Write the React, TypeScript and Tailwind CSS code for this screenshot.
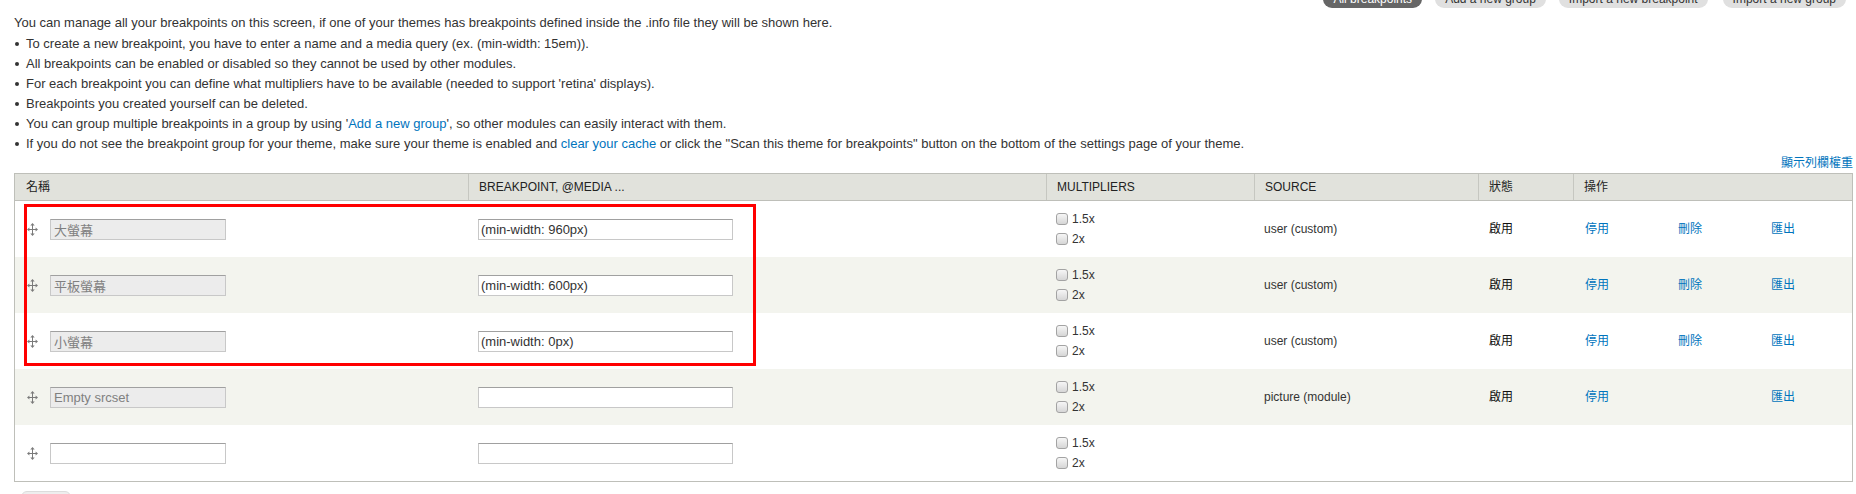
import React from "react";

type Row = {
  name: string;
  nameDisabled: boolean;
  bp: string;
  source: string;
  status: string;
  ops: string[];
  even: boolean;
};

const rows: Row[] = [
  { name: "大螢幕", nameDisabled: true, bp: "(min-width: 960px)", source: "user (custom)", status: "啟用", ops: ["停用", "刪除", "匯出"], even: false },
  { name: "平板螢幕", nameDisabled: true, bp: "(min-width: 600px)", source: "user (custom)", status: "啟用", ops: ["停用", "刪除", "匯出"], even: true },
  { name: "小螢幕", nameDisabled: true, bp: "(min-width: 0px)", source: "user (custom)", status: "啟用", ops: ["停用", "刪除", "匯出"], even: false },
  { name: "Empty srcset", nameDisabled: true, bp: "", source: "picture (module)", status: "啟用", ops: ["停用", "", "匯出"], even: true },
  { name: "", nameDisabled: false, bp: "", source: "", status: "", ops: ["", "", ""], even: false },
];

function Handle() {
  return (
    <svg width="11" height="13" viewBox="0 0 11 13" className="shrink-0">
      <line x1="5.5" y1="1.5" x2="5.5" y2="11.5" stroke="#7a7a7a" strokeWidth="1" />
      <line x1="1.5" y1="6.5" x2="9.5" y2="6.5" stroke="#7a7a7a" strokeWidth="1" />
      <polygon points="5.5,0 3.3,2.6 7.7,2.6" fill="#7a7a7a" />
      <polygon points="5.5,13 3.3,10.4 7.7,10.4" fill="#7a7a7a" />
      <polygon points="0,6.5 2.4,4.6 2.4,8.4" fill="#7a7a7a" />
      <polygon points="11,6.5 8.6,4.6 8.6,8.4" fill="#7a7a7a" />
    </svg>
  );
}

function Checkbox({ label }: { label: string }) {
  return (
    <div className="flex items-center h-[20px]">
      <span className="inline-block w-[12px] h-[12px] rounded-[3px] border border-[#a3a3a3] bg-linear-to-b from-[#f6f6f6] to-[#d6d6d6]" />
      <span className="ml-[4px] text-[12px] text-[#333]">{label}</span>
    </div>
  );
}

const GRID = "grid grid-cols-[453px_578px_208px_224px_95px_93px_93px_93px]";
const FONT = '"Liberation Sans", "Noto Sans CJK TC", Arial, sans-serif';

export default function App() {
  return (
    <div
      className="flex flex-col w-[1856px] h-[494px] overflow-hidden bg-white pl-[14px] pr-[3px] text-[#333]"
      style={{ fontFamily: FONT }}
    >
      {/* top action buttons (cut off) */}
      <div className="-mt-[13px] flex justify-end pr-[7px] text-[12px]">
        <span className="h-[21px] pt-[4px] leading-[17px] px-[10px] rounded-[9px] bg-[#666] text-white">All breakpoints</span>
        <span className="ml-[13px] h-[21px] pt-[4px] leading-[17px] px-[10px] rounded-[9px] bg-[#e0e0e0] text-[#333]">Add a new group</span>
        <span className="ml-[13px] h-[21px] pt-[4px] leading-[17px] px-[10px] rounded-[9px] bg-[#e0e0e0] text-[#333]">Import a new breakpoint</span>
        <span className="ml-[15px] h-[21px] pt-[4px] leading-[17px] px-[10px] rounded-[9px] bg-[#e0e0e0] text-[#333]">Import a new group</span>
      </div>

      <p className="mt-[5px] text-[13px] leading-[20px]">
        You can manage all your breakpoints on this screen, if one of your themes has breakpoints defined inside the .info file they will be shown here.
      </p>
      <ul className="mt-[1px] text-[13px] leading-[20px]">
        {[
          <>To create a new breakpoint, you have to enter a name and a media query (ex. (min-width: 15em)).</>,
          <>All breakpoints can be enabled or disabled so they cannot be used by other modules.</>,
          <>For each breakpoint you can define what multipliers have to be available (needed to support 'retina' displays).</>,
          <>Breakpoints you created yourself can be deleted.</>,
          <>
            You can group multiple breakpoints in a group by using '<a className="text-[#0074bd]">Add a new group</a>', so other modules can easily interact with them.
          </>,
          <>
            If you do not see the breakpoint group for your theme, make sure your theme is enabled and <a className="text-[#0074bd]">clear your cache</a> or click the "Scan this theme for breakpoints" button on the bottom of the settings page of your theme.
          </>,
        ].map((c, i) => (
          <li key={i} className="flex items-center">
            <span className="w-[12px] flex justify-start pl-[1px]">
              <span className="inline-block w-[4px] h-[4px] rounded-full bg-[#333]" />
            </span>
            <span>{c}</span>
          </li>
        ))}
      </ul>

      <div className="flex justify-end h-[20px] items-center text-[12px]">
        <a className="text-[#0074bd]">顯示列欄權重</a>
      </div>

      <div className="relative mt-[1px] w-[1839px]">
        <div className="border border-[#bebfb9]">
          {/* header */}
          <div className={`${GRID} h-[27px] bg-[#e1e2dc] border-b border-[#bebfb9] text-[12px] text-[#222] uppercase`}>
            <div className="pl-[11px] flex items-center">名稱</div>
            <div className="pl-[10px] flex items-center border-l border-[#c6c7c1]">Breakpoint, @media ...</div>
            <div className="pl-[10px] flex items-center border-l border-[#c6c7c1]">Multipliers</div>
            <div className="pl-[10px] flex items-center border-l border-[#c6c7c1]">Source</div>
            <div className="pl-[10px] flex items-center border-l border-[#c6c7c1]">狀態</div>
            <div className="col-span-3 pl-[10px] flex items-center border-l border-[#c6c7c1]">操作</div>
          </div>

          {rows.map((r, i) => (
            <div key={i} className={`${GRID} h-[56px] text-[12px] ${r.even ? "bg-[#f3f4ee]" : "bg-white"}`}>
              <div className="pl-[12px] flex items-center">
                <Handle />
                <input
                  readOnly
                  value={r.name}
                  className={`ml-[12px] w-[176px] h-[21px] px-[3px] text-[13px] border border-[#c8c8c8] border-t-[#a0a0a0] outline-none ${
                    r.nameDisabled ? "bg-[#ececec] text-[#808080]" : "bg-white text-[#333]"
                  }`}
                  style={{ fontFamily: FONT }}
                />
              </div>
              <div className="pl-[10px] flex items-center">
                <input
                  readOnly
                  value={r.bp}
                  className="w-[255px] h-[21px] px-[2px] text-[13px] text-[#333] bg-white border border-[#c8c8c8] border-t-[#a0a0a0] outline-none"
                  style={{ fontFamily: FONT }}
                />
              </div>
              <div className="pl-[10px] flex flex-col justify-center">
                <Checkbox label="1.5x" />
                <Checkbox label="2x" />
              </div>
              <div className="pl-[10px] flex items-center">{r.source}</div>
              <div className="pl-[11px] flex items-center text-[#111]">{r.status}</div>
              {r.ops.map((o, j) => (
                <div key={j} className="pl-[12px] flex items-center">
                  {o && <a className="text-[#0074bd]">{o}</a>}
                </div>
              ))}
            </div>
          ))}
        </div>

        {/* red annotation box */}
        <div className="absolute left-[10px] top-[31px] w-[732px] h-[162px] border-[3px] border-[#ff0000] pointer-events-none" />
      </div>

      <div className="mt-[9px] ml-[7px] flex">
        <span className="h-[26px] px-[12px] leading-[26px] rounded-[6px] bg-[#eeeeee] border border-[#dcdcdc] text-[12px] text-[#333]">儲存</span>
      </div>
    </div>
  );
}
